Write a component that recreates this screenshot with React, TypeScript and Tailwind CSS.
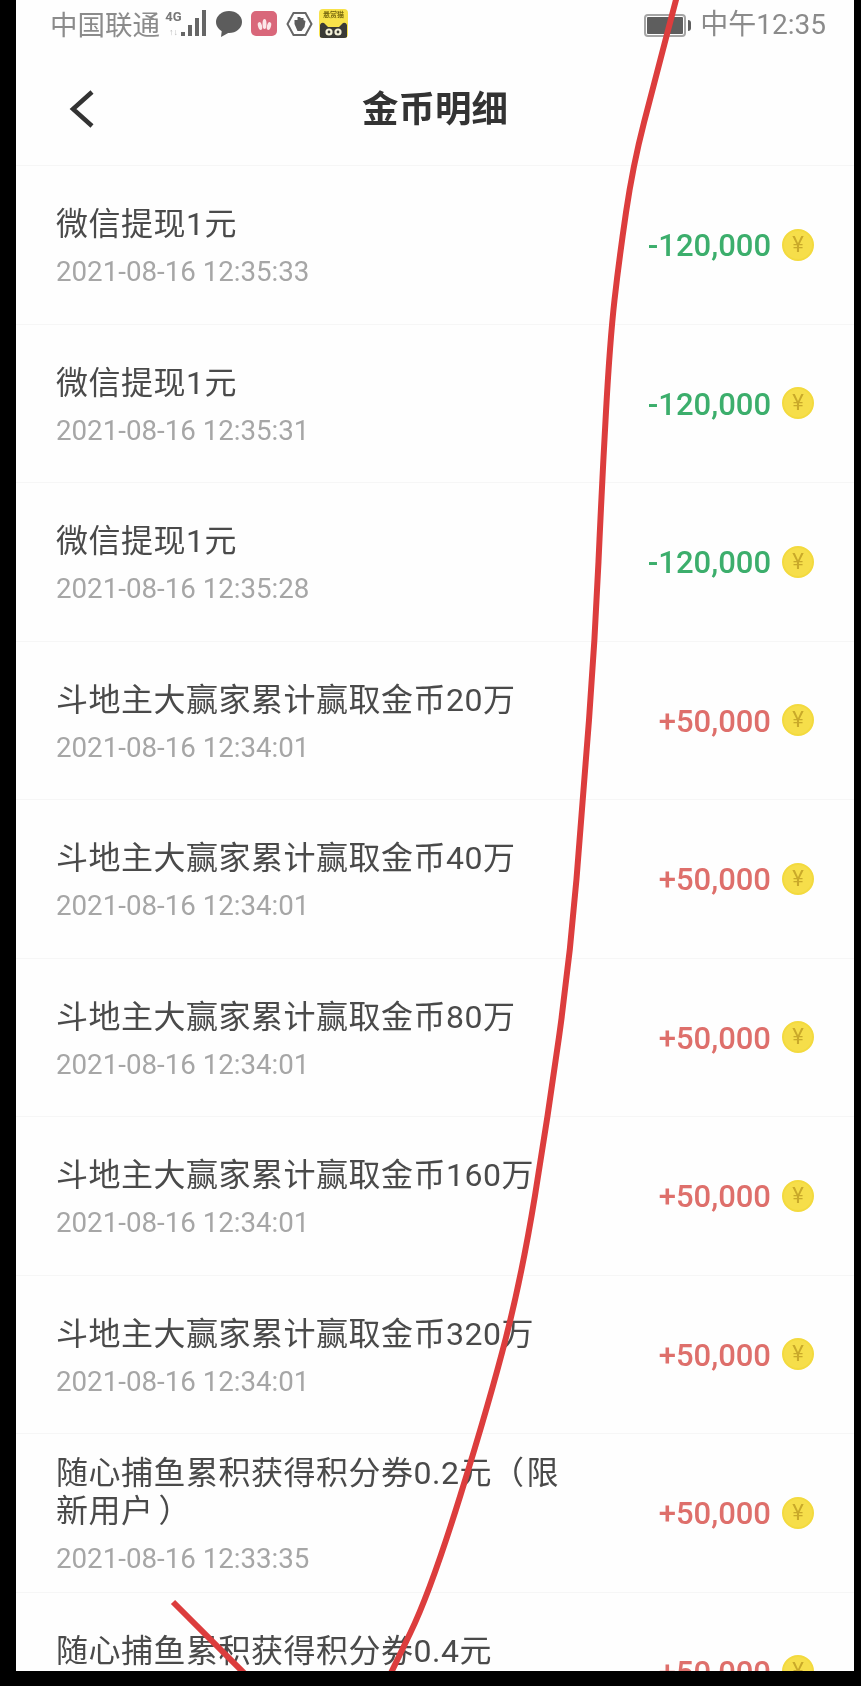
import React from 'react';

type Row = { title: React.ReactNode; time: string; amount: string };

const rows: Row[] = [
  { title: '微信提现1元', time: '2021-08-16 12:35:33', amount: '-120,000' },
  { title: '微信提现1元', time: '2021-08-16 12:35:31', amount: '-120,000' },
  { title: '微信提现1元', time: '2021-08-16 12:35:28', amount: '-120,000' },
  { title: '斗地主大赢家累计赢取金币20万', time: '2021-08-16 12:34:01', amount: '+50,000' },
  { title: '斗地主大赢家累计赢取金币40万', time: '2021-08-16 12:34:01', amount: '+50,000' },
  { title: '斗地主大赢家累计赢取金币80万', time: '2021-08-16 12:34:01', amount: '+50,000' },
  { title: '斗地主大赢家累计赢取金币160万', time: '2021-08-16 12:34:01', amount: '+50,000' },
  { title: '斗地主大赢家累计赢取金币320万', time: '2021-08-16 12:34:01', amount: '+50,000' },
  {
    title: (
      <>
        随心捕鱼累积获得积分券0.2元<span className="pr-[2px]">（</span>限新用户<span className="pl-[5px]">）</span>
      </>
    ),
    time: '2021-08-16 12:33:35',
    amount: '+50,000',
  },
  { title: '随心捕鱼累积获得积分券0.4元', time: '2021-08-16 12:33:35', amount: '+50,000' },
];

const penPoints: [number, number][] = [
  [677, -4], [655, 80], [633, 165], [619, 260], [610, 340], [602, 483], [595, 640], [583, 800],
  [570, 958], [548, 1116], [522, 1275], [490, 1400], [431, 1590], [390, 1675],
];

// smooth line through the midpoints of the hand-drawn stroke
function smoothPath(points: [number, number][]) {
  let d = `M${points[0][0]} ${points[0][1]} L${(points[0][0] + points[1][0]) / 2} ${(points[0][1] + points[1][1]) / 2}`;
  for (let i = 1; i < points.length - 1; i++) {
    const [x, y] = points[i];
    const [nx, ny] = points[i + 1];
    d += ` Q${x} ${y} ${(x + nx) / 2} ${(y + ny) / 2}`;
  }
  const last = points[points.length - 1];
  return `${d} L${last[0]} ${last[1]}`;
}

function Coin() {
  return (
    <div className="flex h-8 w-8 shrink-0 items-center justify-center rounded-full border-2 border-[#f3da3e] bg-[#f6de4a]">
      <span className="font-['Roboto',sans-serif] text-[22px] leading-none text-[#c9a92a]">¥</span>
    </div>
  );
}

function StatusIcons() {
  return (
    <div className="mb-[3px] ml-[6px] flex items-center">
      <div className="flex h-[27px] w-[15px] flex-col items-center justify-between font-['Roboto',sans-serif] leading-none">
        <span className="text-[13px] font-bold text-[#777]">4G</span>
        <span className="text-[9px] text-[#bbb]">↑↓</span>
      </div>
      <svg width="25" height="27" viewBox="0 0 25 27" fill="#666">
        <rect x="0" y="22" width="4" height="4" />
        <rect x="7" y="15" width="4" height="11" />
        <rect x="14" y="8" width="4" height="18" />
        <rect x="21" y="0" width="4" height="26" />
      </svg>
      <svg width="26" height="27" viewBox="0 0 26 27" className="ml-[10px]" fill="#5c5c5c">
        <ellipse cx="13" cy="12" rx="13" ry="11" />
        <path d="M6 19 L5 27 L14 22 Z" />
      </svg>
      <div className="ml-[9px] flex h-[25px] w-[26px] items-center justify-center rounded-[5px] bg-[#d9677a]">
        <svg width="17" height="17" viewBox="0 0 17 17" fill="#fbe6e8">
          <ellipse cx="4" cy="11" rx="2" ry="4" transform="rotate(-15 4 11)" />
          <ellipse cx="8.5" cy="9" rx="2" ry="5" />
          <ellipse cx="13" cy="11" rx="2" ry="4" transform="rotate(15 13 11)" />
        </svg>
      </div>
      <svg width="27" height="26" viewBox="0 0 26 26" className="ml-[9px]">
        <path d="M7 2 H19 L25 13 L19 24 H7 L1 13 Z" fill="none" stroke="#666" strokeWidth="2" />
        <path d="M8 13 L8 9 L11 9 L11 6 L14 6 L14 7 L17 7 L17 9 L19 10 L18 16 L15 20 L11 20 Z" fill="#5c5c5c" />
      </svg>
      <div className="ml-[6px] flex h-[29px] w-[29px] flex-col items-center overflow-hidden rounded-[4px] bg-[#f8e24a]">
        <span className="mt-[2px] font-['Noto_Sans_CJK_SC',sans-serif] text-[7px] font-bold leading-none text-[#7a6a10]">悬赏猫</span>
        <svg width="29" height="18" viewBox="0 0 29 18" className="mt-auto">
          <path d="M1 18 V5 Q2 2 5 3 L9 7 H20 L24 3 Q27 2 28 5 V18 Z" fill="#3a3a36" />
          <circle cx="10" cy="12" r="3.6" fill="#f4f1d8" />
          <circle cx="19" cy="12" r="3.6" fill="#f4f1d8" />
          <circle cx="10" cy="12" r="1.4" fill="#3a3a36" />
          <circle cx="19" cy="12" r="1.4" fill="#3a3a36" />
        </svg>
      </div>
    </div>
  );
}

export default function App() {
  return (
    <div className="h-[1686px] w-[861px] overflow-hidden bg-black pl-4 pr-[7px] pb-[15px] blur-[0.5px]">
      <div className="relative h-full overflow-hidden bg-[#fefefe] font-['Roboto','Noto_Sans_CJK_SC',sans-serif]">
        <div className="flex h-[50px] items-center justify-between pl-[34px] pr-[28px] text-[27.5px] leading-none text-[#8b8b8b]">
          <div className="flex items-center">
            <span className="mb-[3px] font-['Noto_Sans_CJK_SC',sans-serif]">中国联通</span>
            <StatusIcons />
          </div>
          <div className="flex items-center">
            <div className="flex items-center">
              <div className="h-[23px] w-[42px] rounded-[4px] border-2 border-[#a5a5a5] p-[1px]">
                <div className="h-full w-full rounded-[1px] bg-[#5e5e5e]" />
              </div>
              <div className="ml-[2px] h-[11px] w-[3px] rounded-r-sm bg-[#5e5e5e]" />
            </div>
            <span className="ml-[9px] text-[28px]">中午12:35</span>
          </div>
        </div>

        <div className="relative flex h-[116px] items-center justify-center border-b border-[#f6f6f6]">
          <svg width="28" height="40" viewBox="0 0 28 40" className="absolute left-[52px] top-[39px]" fill="none" stroke="#333" strokeWidth="4.5">
            <path d="M24 3 L5 20 L24 37" />
          </svg>
          <h1 className="mb-[1px] font-['Noto_Sans_CJK_SC',sans-serif] text-[36.5px] font-bold leading-none text-[#333]">金币明细</h1>
        </div>

        {rows.map((row, index) => (
          <div key={index} className="flex h-[158.5px] items-center justify-between border-b border-[#f6f6f6] px-10">
            <div className="w-[510px] pt-[6px]">
              <p className="text-[32px] leading-[38px] tracking-[0.5px] text-[#4a4a4a]">{row.title}</p>
              <p className="mt-[11px] text-[27.7px] leading-9 text-[#a6a6a6]">{row.time}</p>
            </div>
            <div className="flex items-center gap-[11px]">
              <span className={`pt-[2px] text-[31px] font-medium leading-none ${row.amount.startsWith('-') ? 'text-[#3cae6c]' : 'text-[#de6f6b]'}`}>
                {row.amount}
              </span>
              <Coin />
            </div>
          </div>
        ))}

        {/* red pen marks scribbled over the screenshot */}
        <svg viewBox="16 0 838 1671" className="absolute inset-0 h-full w-full" fill="none" stroke="#dc3d3d" strokeWidth="6">
          <path d={smoothPath(penPoints)} />
          <path d="M173 1602 L246 1675" />
        </svg>
      </div>
    </div>
  );
}
